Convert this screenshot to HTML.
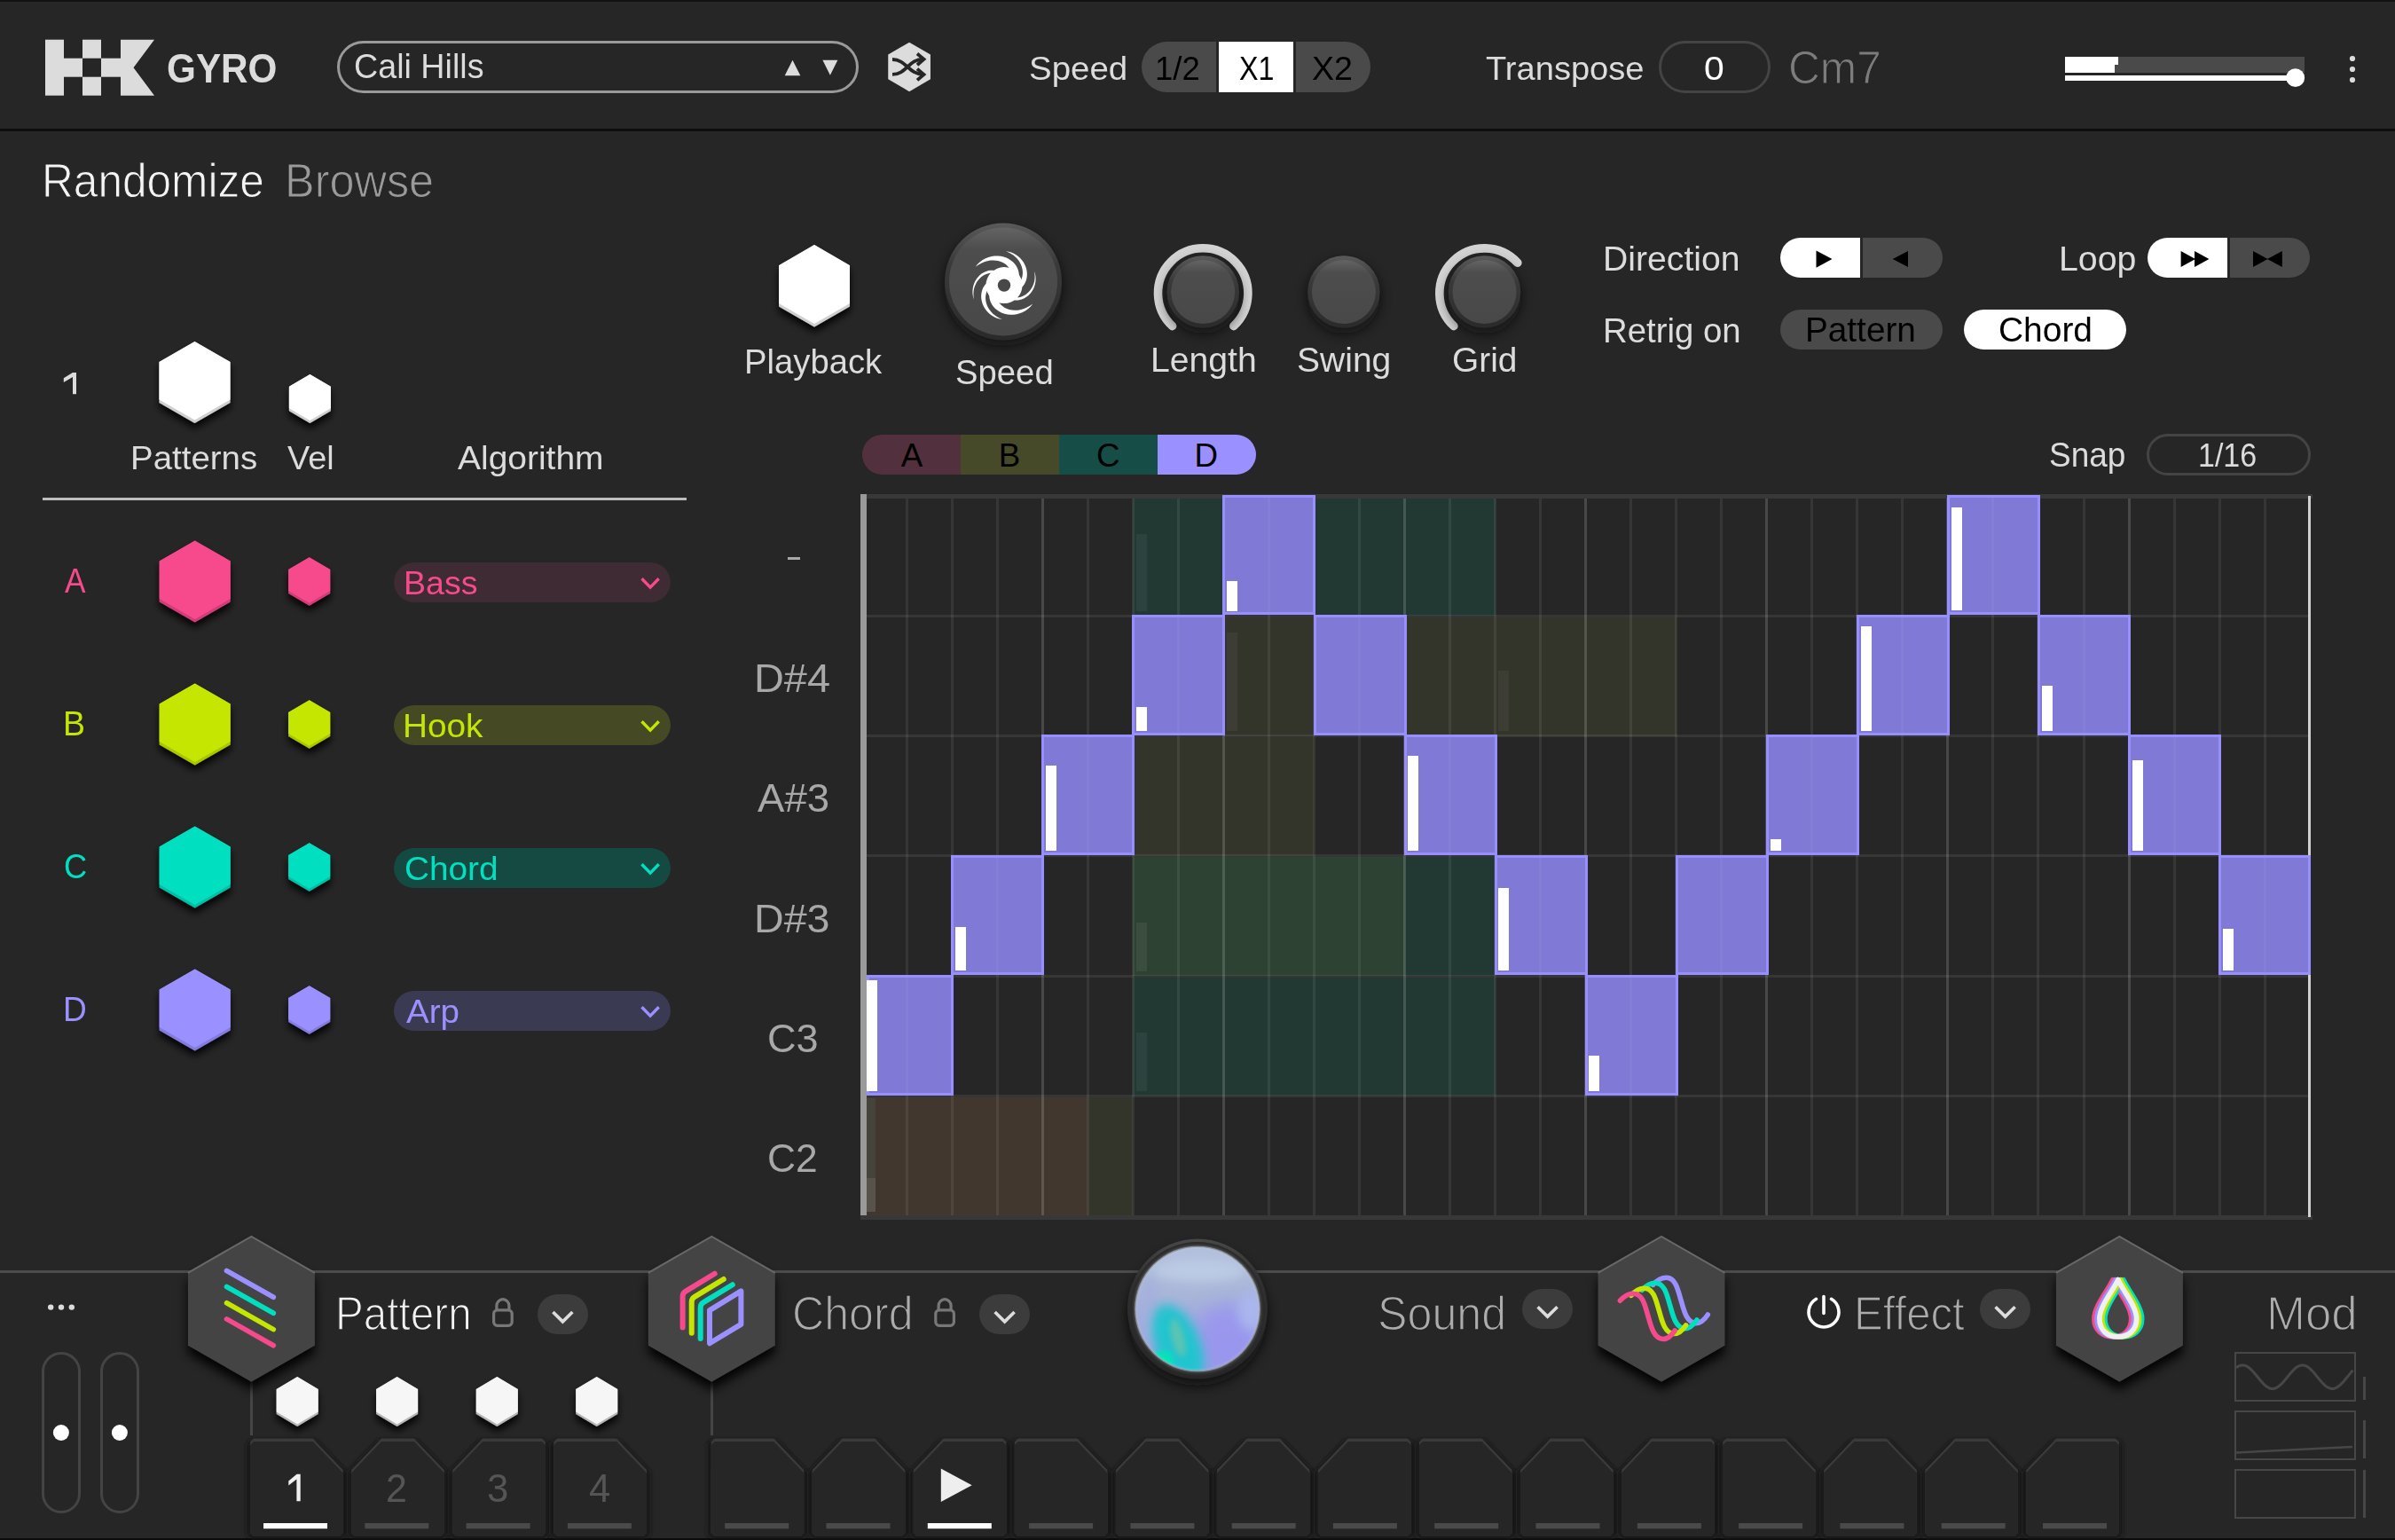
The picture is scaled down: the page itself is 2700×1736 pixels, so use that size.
<!DOCTYPE html>
<html><head><meta charset="utf-8"><title>GYRO</title>
<style>
html,body{margin:0;padding:0;}
body{width:2700px;height:1736px;background:#262626;position:relative;overflow:hidden;font-family:"Liberation Sans",sans-serif;}
.b{position:absolute;box-sizing:border-box;}
.t{position:absolute;white-space:nowrap;line-height:1;transform-origin:0 0;display:block;}
svg.ov{position:absolute;left:0;top:0;}
</style></head>
<body>
<div class="b" style="left:0.00px;top:0.00px;width:2700.00px;height:1.50px;background:#111;"></div>
<div class="b" style="left:0.00px;top:144.50px;width:2700.00px;height:3.00px;background:#0e0e0e;"></div>
<div class="b" style="left:380.00px;top:46.00px;width:587.50px;height:59.00px;background:transparent;border:3px solid #9a9a9a;border-radius:30px;"></div>
<div class="b" style="left:1287.00px;top:46.80px;width:84.00px;height:57.50px;background:#4a4a4a;border-radius:29px 0 0 29px;"></div>
<div class="b" style="left:1374.00px;top:46.80px;width:84.00px;height:57.50px;background:#ffffff;"></div>
<div class="b" style="left:1461.00px;top:46.80px;width:84.00px;height:57.50px;background:#4a4a4a;border-radius:0 29px 29px 0;"></div>
<div class="b" style="left:1870.40px;top:46.00px;width:125.60px;height:59.00px;background:transparent;border:3px solid #444;border-radius:30px;"></div>
<div class="b" style="left:2328.00px;top:63.70px;width:270.00px;height:18.50px;background:#4a4a4a;"></div>
<div class="b" style="left:2328.00px;top:63.70px;width:60.00px;height:9.50px;background:#fff;"></div>
<div class="b" style="left:2328.00px;top:73.00px;width:56.00px;height:9.20px;background:#fff;"></div>
<div class="b" style="left:2328.00px;top:85.00px;width:262.00px;height:6.00px;background:#fff;"></div>
<div class="b" style="left:48.00px;top:560.50px;width:726.00px;height:3.00px;background:#bdbdbd;"></div>
<div class="b" style="left:443.50px;top:633.50px;width:312.00px;height:45.00px;background:#3e2b33;border-radius:23px;"></div>
<div class="b" style="left:443.50px;top:794.50px;width:312.00px;height:45.00px;background:#454a24;border-radius:23px;"></div>
<div class="b" style="left:443.50px;top:955.50px;width:312.00px;height:45.00px;background:#154a43;border-radius:23px;"></div>
<div class="b" style="left:443.50px;top:1116.50px;width:312.00px;height:45.00px;background:#3a3a52;border-radius:23px;"></div>
<div class="b" style="left:2007.00px;top:268.00px;width:90.00px;height:45.00px;background:#fff;border-radius:23px 0 0 23px;"></div>
<div class="b" style="left:2100.00px;top:268.00px;width:90.00px;height:45.00px;background:#4a4a4a;border-radius:0 23px 23px 0;"></div>
<div class="b" style="left:2421.00px;top:268.00px;width:90.00px;height:45.00px;background:#fff;border-radius:23px 0 0 23px;"></div>
<div class="b" style="left:2514.00px;top:268.00px;width:90.00px;height:45.00px;background:#4a4a4a;border-radius:0 23px 23px 0;"></div>
<div class="b" style="left:2007.00px;top:348.80px;width:183.00px;height:45.00px;background:#4a4a4a;border-radius:23px;"></div>
<div class="b" style="left:2213.70px;top:348.80px;width:183.30px;height:45.00px;background:#fff;border-radius:23px;"></div>
<div class="b" style="left:972.00px;top:490.00px;width:111.00px;height:45.00px;background:#53303e;border-radius:23px 0 0 23px;"></div>
<div class="b" style="left:1083.00px;top:490.00px;width:111.00px;height:45.00px;background:#464a28;"></div>
<div class="b" style="left:1194.00px;top:490.00px;width:111.00px;height:45.00px;background:#164e47;"></div>
<div class="b" style="left:1305.00px;top:490.00px;width:111.00px;height:45.00px;background:#9b90ff;border-radius:0 23px 23px 0;"></div>
<div class="b" style="left:2420.00px;top:488.70px;width:185.00px;height:47.30px;background:transparent;border:3px solid #444;border-radius:24px;"></div>
<div class="b" style="left:1277.38px;top:560.50px;width:102.06px;height:133.80px;background:#223833;"></div>
<div class="b" style="left:1481.50px;top:560.50px;width:204.12px;height:133.80px;background:#223833;"></div>
<div class="b" style="left:1379.44px;top:695.80px;width:102.06px;height:133.80px;background:#33352a;"></div>
<div class="b" style="left:1583.56px;top:695.80px;width:306.18px;height:133.80px;background:#33352a;"></div>
<div class="b" style="left:1277.38px;top:831.10px;width:204.12px;height:133.80px;background:#33352a;"></div>
<div class="b" style="left:1277.38px;top:966.40px;width:306.18px;height:133.80px;background:#2d4232;"></div>
<div class="b" style="left:1583.56px;top:966.40px;width:102.06px;height:133.80px;background:#223833;"></div>
<div class="b" style="left:1277.38px;top:1101.70px;width:408.24px;height:133.80px;background:#223833;"></div>
<div class="b" style="left:976.50px;top:1237.00px;width:249.85px;height:133.80px;background:#42372e;"></div>
<div class="b" style="left:1226.35px;top:1237.00px;width:51.03px;height:133.80px;background:#33352a;"></div>
<div class="b" style="left:1281.18px;top:602.30px;width:11.60px;height:86.50px;background:#2d423e;"></div>
<div class="b" style="left:1383.24px;top:713.10px;width:11.60px;height:111.00px;background:#3d3d36;"></div>
<div class="b" style="left:1689.42px;top:756.10px;width:11.60px;height:68.00px;background:#3d3d36;"></div>
<div class="b" style="left:1281.18px;top:1039.70px;width:11.60px;height:55.00px;background:#3a4d3f;"></div>
<div class="b" style="left:1281.18px;top:1164.00px;width:11.60px;height:66.00px;background:#2d423e;"></div>
<div class="b" style="left:977.00px;top:1238.00px;width:10.00px;height:90.00px;background:#46443a;"></div>
<div class="b" style="left:977.00px;top:1327.60px;width:10.00px;height:38.00px;background:#57524a;"></div>
<div class="b" style="left:1020.73px;top:562.00px;width:3.00px;height:808.00px;background:rgba(255,255,255,0.075);"></div>
<div class="b" style="left:1071.76px;top:562.00px;width:3.00px;height:808.00px;background:rgba(255,255,255,0.075);"></div>
<div class="b" style="left:1122.79px;top:562.00px;width:3.00px;height:808.00px;background:rgba(255,255,255,0.075);"></div>
<div class="b" style="left:1173.82px;top:562.00px;width:3.00px;height:808.00px;background:rgba(255,255,255,0.155);"></div>
<div class="b" style="left:1224.85px;top:562.00px;width:3.00px;height:808.00px;background:rgba(255,255,255,0.075);"></div>
<div class="b" style="left:1275.88px;top:562.00px;width:3.00px;height:808.00px;background:rgba(255,255,255,0.075);"></div>
<div class="b" style="left:1326.91px;top:562.00px;width:3.00px;height:808.00px;background:rgba(255,255,255,0.075);"></div>
<div class="b" style="left:1377.94px;top:562.00px;width:3.00px;height:808.00px;background:rgba(255,255,255,0.155);"></div>
<div class="b" style="left:1428.97px;top:562.00px;width:3.00px;height:808.00px;background:rgba(255,255,255,0.075);"></div>
<div class="b" style="left:1480.00px;top:562.00px;width:3.00px;height:808.00px;background:rgba(255,255,255,0.075);"></div>
<div class="b" style="left:1531.03px;top:562.00px;width:3.00px;height:808.00px;background:rgba(255,255,255,0.075);"></div>
<div class="b" style="left:1582.06px;top:562.00px;width:3.00px;height:808.00px;background:rgba(255,255,255,0.155);"></div>
<div class="b" style="left:1633.09px;top:562.00px;width:3.00px;height:808.00px;background:rgba(255,255,255,0.075);"></div>
<div class="b" style="left:1684.12px;top:562.00px;width:3.00px;height:808.00px;background:rgba(255,255,255,0.075);"></div>
<div class="b" style="left:1735.15px;top:562.00px;width:3.00px;height:808.00px;background:rgba(255,255,255,0.075);"></div>
<div class="b" style="left:1786.18px;top:562.00px;width:3.00px;height:808.00px;background:rgba(255,255,255,0.155);"></div>
<div class="b" style="left:1837.21px;top:562.00px;width:3.00px;height:808.00px;background:rgba(255,255,255,0.075);"></div>
<div class="b" style="left:1888.24px;top:562.00px;width:3.00px;height:808.00px;background:rgba(255,255,255,0.075);"></div>
<div class="b" style="left:1939.27px;top:562.00px;width:3.00px;height:808.00px;background:rgba(255,255,255,0.075);"></div>
<div class="b" style="left:1990.30px;top:562.00px;width:3.00px;height:808.00px;background:rgba(255,255,255,0.155);"></div>
<div class="b" style="left:2041.33px;top:562.00px;width:3.00px;height:808.00px;background:rgba(255,255,255,0.075);"></div>
<div class="b" style="left:2092.36px;top:562.00px;width:3.00px;height:808.00px;background:rgba(255,255,255,0.075);"></div>
<div class="b" style="left:2143.39px;top:562.00px;width:3.00px;height:808.00px;background:rgba(255,255,255,0.075);"></div>
<div class="b" style="left:2194.42px;top:562.00px;width:3.00px;height:808.00px;background:rgba(255,255,255,0.155);"></div>
<div class="b" style="left:2245.45px;top:562.00px;width:3.00px;height:808.00px;background:rgba(255,255,255,0.075);"></div>
<div class="b" style="left:2296.48px;top:562.00px;width:3.00px;height:808.00px;background:rgba(255,255,255,0.075);"></div>
<div class="b" style="left:2347.51px;top:562.00px;width:3.00px;height:808.00px;background:rgba(255,255,255,0.075);"></div>
<div class="b" style="left:2398.54px;top:562.00px;width:3.00px;height:808.00px;background:rgba(255,255,255,0.155);"></div>
<div class="b" style="left:2449.57px;top:562.00px;width:3.00px;height:808.00px;background:rgba(255,255,255,0.075);"></div>
<div class="b" style="left:2500.60px;top:562.00px;width:3.00px;height:808.00px;background:rgba(255,255,255,0.075);"></div>
<div class="b" style="left:2551.63px;top:562.00px;width:3.00px;height:808.00px;background:rgba(255,255,255,0.075);"></div>
<div class="b" style="left:976.50px;top:692.80px;width:1625.20px;height:3.00px;background:rgba(255,255,255,0.075);"></div>
<div class="b" style="left:976.50px;top:828.10px;width:1625.20px;height:3.00px;background:rgba(255,255,255,0.075);"></div>
<div class="b" style="left:976.50px;top:963.40px;width:1625.20px;height:3.00px;background:rgba(255,255,255,0.075);"></div>
<div class="b" style="left:976.50px;top:1098.70px;width:1625.20px;height:3.00px;background:rgba(255,255,255,0.075);"></div>
<div class="b" style="left:976.50px;top:1234.00px;width:1625.20px;height:3.00px;background:rgba(255,255,255,0.075);"></div>
<div class="b" style="left:976.50px;top:556.50px;width:1630.00px;height:5.50px;background:#383838;"></div>
<div class="b" style="left:970.00px;top:1369.70px;width:1636.50px;height:5.30px;background:#383838;"></div>
<div class="b" style="left:970.00px;top:556.50px;width:6.50px;height:813.20px;background:#9a9a9a;"></div>
<div class="b" style="left:2601.70px;top:559.00px;width:3.10px;height:813.00px;background:#d0d0d0;"></div>
<div class="b" style="left:1378.44px;top:557.80px;width:105.06px;height:135.50px;background:#807ad6;border:3px solid #978fff;box-sizing:border-box;"></div>
<div class="b" style="left:1428.97px;top:560.80px;width:3.00px;height:129.50px;background:rgba(255,255,255,0.035);"></div>
<div class="b" style="left:1383.24px;top:655.00px;width:12.00px;height:33.50px;background:#fff;"></div>
<div class="b" style="left:2194.92px;top:557.80px;width:105.06px;height:135.50px;background:#807ad6;border:3px solid #978fff;box-sizing:border-box;"></div>
<div class="b" style="left:2245.45px;top:560.80px;width:3.00px;height:129.50px;background:rgba(255,255,255,0.035);"></div>
<div class="b" style="left:2199.72px;top:572.10px;width:12.00px;height:116.40px;background:#fff;"></div>
<div class="b" style="left:1276.38px;top:693.10px;width:105.06px;height:135.50px;background:#807ad6;border:3px solid #978fff;box-sizing:border-box;"></div>
<div class="b" style="left:1326.91px;top:696.10px;width:3.00px;height:129.50px;background:rgba(255,255,255,0.035);"></div>
<div class="b" style="left:1281.18px;top:796.80px;width:12.00px;height:27.00px;background:#fff;"></div>
<div class="b" style="left:1480.50px;top:693.10px;width:105.06px;height:135.50px;background:#807ad6;border:3px solid #978fff;box-sizing:border-box;"></div>
<div class="b" style="left:1531.03px;top:696.10px;width:3.00px;height:129.50px;background:rgba(255,255,255,0.035);"></div>
<div class="b" style="left:2092.86px;top:693.10px;width:105.06px;height:135.50px;background:#807ad6;border:3px solid #978fff;box-sizing:border-box;"></div>
<div class="b" style="left:2143.39px;top:696.10px;width:3.00px;height:129.50px;background:rgba(255,255,255,0.035);"></div>
<div class="b" style="left:2097.66px;top:706.30px;width:12.00px;height:117.50px;background:#fff;"></div>
<div class="b" style="left:2296.98px;top:693.10px;width:105.06px;height:135.50px;background:#807ad6;border:3px solid #978fff;box-sizing:border-box;"></div>
<div class="b" style="left:2347.51px;top:696.10px;width:3.00px;height:129.50px;background:rgba(255,255,255,0.035);"></div>
<div class="b" style="left:2301.78px;top:772.80px;width:12.00px;height:51.00px;background:#fff;"></div>
<div class="b" style="left:1174.32px;top:828.40px;width:105.06px;height:135.50px;background:#807ad6;border:3px solid #978fff;box-sizing:border-box;"></div>
<div class="b" style="left:1224.85px;top:831.40px;width:3.00px;height:129.50px;background:rgba(255,255,255,0.035);"></div>
<div class="b" style="left:1179.12px;top:862.60px;width:12.00px;height:96.50px;background:#fff;"></div>
<div class="b" style="left:1582.56px;top:828.40px;width:105.06px;height:135.50px;background:#807ad6;border:3px solid #978fff;box-sizing:border-box;"></div>
<div class="b" style="left:1633.09px;top:831.40px;width:3.00px;height:129.50px;background:rgba(255,255,255,0.035);"></div>
<div class="b" style="left:1587.36px;top:852.40px;width:12.00px;height:106.70px;background:#fff;"></div>
<div class="b" style="left:1990.80px;top:828.40px;width:105.06px;height:135.50px;background:#807ad6;border:3px solid #978fff;box-sizing:border-box;"></div>
<div class="b" style="left:2041.33px;top:831.40px;width:3.00px;height:129.50px;background:rgba(255,255,255,0.035);"></div>
<div class="b" style="left:1995.60px;top:946.10px;width:12.00px;height:13.00px;background:#fff;"></div>
<div class="b" style="left:2399.04px;top:828.40px;width:105.06px;height:135.50px;background:#807ad6;border:3px solid #978fff;box-sizing:border-box;"></div>
<div class="b" style="left:2449.57px;top:831.40px;width:3.00px;height:129.50px;background:rgba(255,255,255,0.035);"></div>
<div class="b" style="left:2403.84px;top:856.60px;width:12.00px;height:102.50px;background:#fff;"></div>
<div class="b" style="left:1072.26px;top:963.70px;width:105.06px;height:135.50px;background:#807ad6;border:3px solid #978fff;box-sizing:border-box;"></div>
<div class="b" style="left:1122.79px;top:966.70px;width:3.00px;height:129.50px;background:rgba(255,255,255,0.035);"></div>
<div class="b" style="left:1077.06px;top:1045.40px;width:12.00px;height:49.00px;background:#fff;"></div>
<div class="b" style="left:1684.62px;top:963.70px;width:105.06px;height:135.50px;background:#807ad6;border:3px solid #978fff;box-sizing:border-box;"></div>
<div class="b" style="left:1735.15px;top:966.70px;width:3.00px;height:129.50px;background:rgba(255,255,255,0.035);"></div>
<div class="b" style="left:1689.42px;top:1001.40px;width:12.00px;height:93.00px;background:#fff;"></div>
<div class="b" style="left:1888.74px;top:963.70px;width:105.06px;height:135.50px;background:#807ad6;border:3px solid #978fff;box-sizing:border-box;"></div>
<div class="b" style="left:1939.27px;top:966.70px;width:3.00px;height:129.50px;background:rgba(255,255,255,0.035);"></div>
<div class="b" style="left:2501.10px;top:963.70px;width:103.70px;height:135.50px;background:#807ad6;border:3px solid #978fff;box-sizing:border-box;"></div>
<div class="b" style="left:2551.63px;top:966.70px;width:3.00px;height:129.50px;background:rgba(255,255,255,0.035);"></div>
<div class="b" style="left:2505.90px;top:1047.10px;width:12.00px;height:47.30px;background:#fff;"></div>
<div class="b" style="left:976.50px;top:1099.00px;width:98.76px;height:135.50px;background:#807ad6;border:3px solid #978fff;box-sizing:border-box;"></div>
<div class="b" style="left:1020.73px;top:1102.00px;width:3.00px;height:129.50px;background:rgba(255,255,255,0.035);"></div>
<div class="b" style="left:976.50px;top:1104.70px;width:12.00px;height:125.00px;background:#fff;"></div>
<div class="b" style="left:1786.68px;top:1099.00px;width:105.06px;height:135.50px;background:#807ad6;border:3px solid #978fff;box-sizing:border-box;"></div>
<div class="b" style="left:1837.21px;top:1102.00px;width:3.00px;height:129.50px;background:rgba(255,255,255,0.035);"></div>
<div class="b" style="left:1791.48px;top:1189.70px;width:12.00px;height:40.00px;background:#fff;"></div>
<div class="b" style="left:888.00px;top:628.30px;width:14.00px;height:3.20px;background:#a8a8a8;"></div>
<div class="b" style="left:0.00px;top:1432.00px;width:2700.00px;height:3.00px;background:#4c4c4c;"></div>
<div class="b" style="left:0.00px;top:1734.30px;width:2700.00px;height:1.70px;background:#0c0c0c;"></div>
<div class="b" style="left:47.00px;top:1524.00px;width:44.00px;height:182.30px;background:transparent;border:3px solid #444;border-radius:22px;box-sizing:border-box;"></div>
<div class="b" style="left:112.80px;top:1524.00px;width:44.00px;height:182.30px;background:transparent;border:3px solid #444;border-radius:22px;box-sizing:border-box;"></div>
<div class="b" style="left:282.00px;top:1557.00px;width:3.00px;height:61.00px;background:#454545;"></div>
<div class="b" style="left:801.00px;top:1557.00px;width:3.00px;height:61.00px;background:#454545;"></div>
<div class="b" style="left:605.80px;top:1458.80px;width:57.30px;height:45.00px;background:#3c3c3c;border-radius:23px;"></div>
<div class="b" style="left:1104.00px;top:1458.80px;width:57.30px;height:45.00px;background:#3c3c3c;border-radius:23px;"></div>
<div class="b" style="left:1716.00px;top:1453.00px;width:57.30px;height:45.00px;background:#3c3c3c;border-radius:23px;"></div>
<div class="b" style="left:2232.00px;top:1453.00px;width:57.30px;height:45.00px;background:#3c3c3c;border-radius:23px;"></div>
<div class="b" style="left:2518.80px;top:1524.00px;width:137.20px;height:56.00px;background:transparent;border:2.6px solid #474747;box-sizing:border-box;"></div>
<div class="b" style="left:2518.80px;top:1589.90px;width:137.20px;height:56.40px;background:transparent;border:2.6px solid #474747;box-sizing:border-box;"></div>
<div class="b" style="left:2518.80px;top:1655.50px;width:137.20px;height:56.50px;background:transparent;border:2.6px solid #474747;box-sizing:border-box;"></div>
<div class="b" style="left:2664.00px;top:1551.50px;width:3.00px;height:26.50px;background:#474747;"></div>
<div class="b" style="left:2664.00px;top:1600.70px;width:3.00px;height:43.30px;background:#474747;"></div>
<div class="b" style="left:2664.00px;top:1657.00px;width:3.00px;height:53.50px;background:#474747;"></div>
<svg class="ov" width="2700" height="1736" viewBox="0 0 2700 1736">
<defs>
<filter id="sh1" x="-40%" y="-40%" width="180%" height="200%"><feDropShadow dx="0" dy="6" stdDeviation="4.5" flood-color="#000" flood-opacity="0.9"/></filter>
<filter id="bh" x="-30%" y="-30%" width="160%" height="170%"><feGaussianBlur stdDeviation="6"/></filter>
<filter id="kb" x="-40%" y="-40%" width="180%" height="180%"><feGaussianBlur stdDeviation="7"/></filter>
<filter id="sl" x="-20%" y="-20%" width="140%" height="140%"><feGaussianBlur stdDeviation="2.5"/></filter>
<linearGradient id="kring" x1="0" y1="0" x2="0" y2="1"><stop offset="0" stop-color="#5a5a5a"/><stop offset="0.35" stop-color="#3a3a3a"/><stop offset="1" stop-color="#2a2a2a"/></linearGradient>
<linearGradient id="kface" x1="0" y1="0" x2="0" y2="1"><stop offset="0" stop-color="#646464"/><stop offset="0.2" stop-color="#4d4d4d"/><stop offset="1" stop-color="#484848"/></linearGradient>
<linearGradient id="sring" x1="0" y1="0" x2="0" y2="1"><stop offset="0" stop-color="#484848"/><stop offset="0.3" stop-color="#303030"/><stop offset="1" stop-color="#262626"/></linearGradient>
<linearGradient id="sph1" x1="0" y1="0" x2="0" y2="1"><stop offset="0" stop-color="#b4c2de"/><stop offset="0.42" stop-color="#a8b5d8"/><stop offset="0.6" stop-color="#a0a8e0"/><stop offset="1" stop-color="#9698ea"/></linearGradient>
<radialGradient id="sph2" cx="0.33" cy="0.85" r="0.5"><stop offset="0" stop-color="#00e0c0" stop-opacity="0.95"/><stop offset="0.5" stop-color="#38c8d0" stop-opacity="0.6"/><stop offset="1" stop-color="#60c0e0" stop-opacity="0"/></radialGradient>
<radialGradient id="sph3" cx="0.75" cy="0.8" r="0.4"><stop offset="0" stop-color="#8f8cf5" stop-opacity="0.9"/><stop offset="1" stop-color="#8f8cf5" stop-opacity="0"/></radialGradient>
<clipPath id="sclip"><circle cx="1350" cy="1475.5" r="69.5"/></clipPath>
<filter id="b2" x="-20%" y="-20%" width="140%" height="140%"><feGaussianBlur stdDeviation="1.5"/></filter>
<filter id="b3" x="-50%" y="-50%" width="200%" height="200%"><feGaussianBlur stdDeviation="3"/></filter>
<filter id="b6" x="-50%" y="-50%" width="200%" height="200%"><feGaussianBlur stdDeviation="6"/></filter>
<filter id="b10" x="-50%" y="-50%" width="200%" height="200%"><feGaussianBlur stdDeviation="10"/></filter>
</defs>
<g fill="#dcdcdc"><rect x="51" y="44.7" width="21" height="63"/><rect x="72" y="65.7" width="21" height="21"/><rect x="93" y="44.7" width="21" height="21"/><rect x="93" y="86.7" width="21" height="21"/><rect x="114" y="65.7" width="22" height="21"/><polygon points="136,44.7 174,44.7 150.5,76.2 174,107.7 136,107.7"/></g>
<polygon points="884.7,85.3 902.3,85.3 893.5,67.8" fill="#dcdcdc"/>
<polygon points="927.4,67.8 944.4,67.8 935.9,84.8" fill="#dcdcdc"/>
<polygon points="1025.10,47.65 1048.95,61.53 1048.95,89.28 1025.10,103.15 1001.25,89.28 1001.25,61.53" fill="#dcdcdc"/>
<g fill="none" stroke="#262626" stroke-width="3.8"><path d="M1006 67 C1022 67,1024 83.9,1041 83.9"/><path d="M1006 83.9 C1022 83.9,1024 66.7,1041 66.7"/><path d="M1034 60.5 L1041.5 66.7 L1034 73.2"/><path d="M1034 77.6 L1041.5 83.9 L1034 90.4"/></g>
<circle cx="2587.7" cy="87.7" r="10.4" fill="#fff"/>
<circle cx="2652" cy="66" r="3.1" fill="#dcdcdc"/>
<circle cx="2652" cy="78" r="3.1" fill="#dcdcdc"/>
<circle cx="2652" cy="90" r="3.1" fill="#dcdcdc"/>
<polygon points="71.8,426.3 81.9,420 86,420 86,444.2 82,444.2 82,425 71.8,431" fill="#dcdcdc"/>
<polygon points="219.50,385.00 259.50,408.00 259.50,454.00 219.50,477.00 179.50,454.00 179.50,408.00" fill="#d0d0d0" filter="url(#sh1)"/>
<polygon points="219.50,385.00 259.50,408.00 259.50,450.50 219.50,473.50 179.50,450.50 179.50,408.00" fill="#ffffff"/>
<polygon points="349.40,422.00 372.90,435.75 372.90,463.25 349.40,477.00 325.90,463.25 325.90,435.75" fill="#d0d0d0" filter="url(#sh1)"/>
<polygon points="349.40,422.00 372.90,435.75 372.90,460.25 349.40,474.00 325.90,460.25 325.90,435.75" fill="#ffffff"/>
<polygon points="219.70,609.50 259.70,632.50 259.70,678.50 219.70,701.50 179.70,678.50 179.70,632.50" fill="#d13e78" filter="url(#sh1)"/>
<polygon points="219.70,609.50 259.70,632.50 259.70,675.00 219.70,698.00 179.70,675.00 179.70,632.50" fill="#f74a8c"/>
<polygon points="348.70,628.25 372.20,641.88 372.20,669.12 348.70,682.75 325.20,669.12 325.20,641.88" fill="#d13e78" filter="url(#sh1)"/>
<polygon points="348.70,628.25 372.20,641.88 372.20,666.12 348.70,679.75 325.20,666.12 325.20,641.88" fill="#f74a8c"/>
<path d="M723.5 652.3 L733.1 662.1 L742.7 652.3" fill="none" stroke="#f74a8c" stroke-width="3.4"/>
<polygon points="219.70,770.50 259.70,793.50 259.70,839.50 219.70,862.50 179.70,839.50 179.70,793.50" fill="#a9c600" filter="url(#sh1)"/>
<polygon points="219.70,770.50 259.70,793.50 259.70,836.00 219.70,859.00 179.70,836.00 179.70,793.50" fill="#c4e600"/>
<polygon points="348.70,789.25 372.20,802.88 372.20,830.12 348.70,843.75 325.20,830.12 325.20,802.88" fill="#a9c600" filter="url(#sh1)"/>
<polygon points="348.70,789.25 372.20,802.88 372.20,827.12 348.70,840.75 325.20,827.12 325.20,802.88" fill="#c4e600"/>
<path d="M723.5 813.3 L733.1 823.1 L742.7 813.3" fill="none" stroke="#c4e600" stroke-width="3.4"/>
<polygon points="219.70,931.50 259.70,954.50 259.70,1000.50 219.70,1023.50 179.70,1000.50 179.70,954.50" fill="#00c0a5" filter="url(#sh1)"/>
<polygon points="219.70,931.50 259.70,954.50 259.70,997.00 219.70,1020.00 179.70,997.00 179.70,954.50" fill="#00e0c0"/>
<polygon points="348.70,950.25 372.20,963.88 372.20,991.12 348.70,1004.75 325.20,991.12 325.20,963.88" fill="#00c0a5" filter="url(#sh1)"/>
<polygon points="348.70,950.25 372.20,963.88 372.20,988.12 348.70,1001.75 325.20,988.12 325.20,963.88" fill="#00e0c0"/>
<path d="M723.5 974.3 L733.1 984.1 L742.7 974.3" fill="none" stroke="#00e0c0" stroke-width="3.4"/>
<polygon points="219.70,1092.50 259.70,1115.50 259.70,1161.50 219.70,1184.50 179.70,1161.50 179.70,1115.50" fill="#847cdc" filter="url(#sh1)"/>
<polygon points="219.70,1092.50 259.70,1115.50 259.70,1158.00 219.70,1181.00 179.70,1158.00 179.70,1115.50" fill="#9b90ff"/>
<polygon points="348.70,1111.25 372.20,1124.88 372.20,1152.12 348.70,1165.75 325.20,1152.12 325.20,1124.88" fill="#847cdc" filter="url(#sh1)"/>
<polygon points="348.70,1111.25 372.20,1124.88 372.20,1149.12 348.70,1162.75 325.20,1149.12 325.20,1124.88" fill="#9b90ff"/>
<path d="M723.5 1135.3 L733.1 1145.1 L742.7 1135.3" fill="none" stroke="#9b90ff" stroke-width="3.4"/>
<polygon points="918.00,276.05 958.00,299.18 958.00,345.43 918.00,368.55 878.00,345.43 878.00,299.18" fill="#d0d0d0" filter="url(#sh1)"/>
<polygon points="918.00,276.05 958.00,299.18 958.00,341.93 918.00,365.05 878.00,341.93 878.00,299.18" fill="#ffffff"/>
<circle cx="1131" cy="323.5" r="66" fill="#111" filter="url(#kb)" opacity="0.75"/>
<circle cx="1131" cy="317.5" r="66" fill="url(#kring)"/>
<circle cx="1131" cy="317.5" r="61" fill="url(#kface)"/>
<path d="M1321.62 367.58 A50.7 50.7 0 1 1 1390.78 367.58" fill="none" stroke="#d2d2d2" stroke-width="9.6" stroke-linecap="round"/>
<circle cx="1356.2" cy="335" r="40.8" fill="#111" filter="url(#kb)" opacity="0.75"/>
<circle cx="1356.2" cy="329" r="40.8" fill="url(#kring)"/>
<circle cx="1356.2" cy="329" r="36" fill="url(#kface)"/>
<circle cx="1514.9" cy="335" r="40.8" fill="#111" filter="url(#kb)" opacity="0.75"/>
<circle cx="1514.9" cy="329" r="40.8" fill="url(#kring)"/>
<circle cx="1514.9" cy="329" r="36" fill="url(#kface)"/>
<path d="M1638.92 367.58 A50.7 50.7 0 1 1 1710.82 296.18" fill="none" stroke="#d2d2d2" stroke-width="9.6" stroke-linecap="round"/>
<circle cx="1673.5" cy="335" r="40.8" fill="#111" filter="url(#kb)" opacity="0.75"/>
<circle cx="1673.5" cy="329" r="40.8" fill="url(#kring)"/>
<circle cx="1673.5" cy="329" r="36" fill="url(#kface)"/>
<g fill="#fff"><polygon points="1099.71,300.63 1102.07,297.71 1104.81,295.16 1107.82,292.99 1111.05,291.23 1114.43,289.90 1117.88,288.98 1121.37,288.49 1124.83,288.42 1128.20,288.75 1131.44,289.47 1134.50,290.54 1137.34,291.94 1139.91,293.63 1142.20,295.57 1144.17,297.71 1145.80,300.02 1147.09,302.43 1148.01,304.90 1148.58,307.39 1148.79,309.84 1139.07,316.65 1139.90,314.83 1140.42,312.82 1140.58,310.69 1140.39,308.48 1139.83,306.24 1138.89,304.03 1137.57,301.90 1135.90,299.91 1133.89,298.10 1131.56,296.53 1128.95,295.23 1126.09,294.26 1123.02,293.64 1119.80,293.40 1116.46,293.57 1113.07,294.16 1109.67,295.18 1106.32,296.63 1103.05,298.49 1099.71,300.63"/><polygon points="1164.29,342.57 1161.93,345.49 1159.19,348.04 1156.18,350.21 1152.95,351.97 1149.57,353.30 1146.12,354.22 1142.63,354.71 1139.17,354.78 1135.80,354.45 1132.56,353.73 1129.50,352.66 1126.66,351.26 1124.09,349.57 1121.80,347.63 1119.83,345.49 1118.20,343.18 1116.91,340.77 1115.99,338.30 1115.42,335.81 1115.21,333.36 1124.93,326.55 1124.10,328.37 1123.58,330.38 1123.42,332.51 1123.61,334.72 1124.17,336.96 1125.11,339.17 1126.43,341.30 1128.10,343.29 1130.11,345.10 1132.44,346.67 1135.05,347.97 1137.91,348.94 1140.98,349.56 1144.20,349.80 1147.54,349.63 1150.93,349.04 1154.33,348.02 1157.68,346.57 1160.95,344.71 1164.29,342.57"/><polygon points="1134.01,283.15 1137.07,283.64 1140.02,284.53 1142.83,285.74 1145.46,287.25 1147.89,289.02 1150.09,291.01 1152.04,293.19 1153.73,295.52 1155.14,297.97 1156.25,300.52 1157.08,303.11 1157.61,305.72 1157.85,308.31 1157.81,310.86 1157.50,313.32 1156.92,315.66 1156.11,317.87 1155.07,319.91 1153.83,321.75 1152.42,323.39 1144.33,322.68 1146.01,321.70 1147.58,320.46 1149.00,318.97 1150.24,317.26 1151.27,315.34 1152.07,313.25 1152.62,311.00 1152.90,308.64 1152.90,306.19 1152.61,303.69 1152.01,301.16 1151.11,298.66 1149.91,296.21 1148.42,293.84 1146.63,291.60 1144.57,289.52 1142.26,287.62 1139.71,285.94 1136.95,284.49 1134.01,283.15"/><polygon points="1129.99,360.05 1126.93,359.56 1123.98,358.67 1121.17,357.46 1118.54,355.95 1116.11,354.18 1113.91,352.19 1111.96,350.01 1110.27,347.68 1108.86,345.23 1107.75,342.68 1106.92,340.09 1106.39,337.48 1106.15,334.89 1106.19,332.34 1106.50,329.88 1107.08,327.54 1107.89,325.33 1108.93,323.29 1110.17,321.45 1111.58,319.81 1119.67,320.52 1117.99,321.50 1116.42,322.74 1115.00,324.23 1113.76,325.94 1112.73,327.86 1111.93,329.95 1111.38,332.20 1111.10,334.56 1111.10,337.01 1111.39,339.51 1111.99,342.04 1112.89,344.54 1114.09,346.99 1115.58,349.36 1117.37,351.60 1119.43,353.68 1121.74,355.58 1124.29,357.26 1127.05,358.71 1129.99,360.05"/><polygon points="1165.99,305.75 1166.83,308.23 1167.35,310.79 1167.58,313.39 1167.54,315.97 1167.24,318.52 1166.70,320.99 1165.93,323.38 1164.95,325.65 1163.77,327.78 1162.42,329.75 1160.90,331.55 1159.25,333.17 1157.47,334.58 1155.61,335.79 1153.67,336.78 1151.69,337.54 1149.68,338.09 1147.68,338.41 1145.69,338.51 1143.76,338.39 1141.18,334.71 1142.97,335.14 1144.84,335.37 1146.77,335.37 1148.73,335.15 1150.70,334.70 1152.66,334.01 1154.57,333.10 1156.42,331.97 1158.18,330.62 1159.83,329.06 1161.35,327.30 1162.71,325.37 1163.89,323.27 1164.88,321.03 1165.66,318.66 1166.21,316.18 1166.52,313.63 1166.58,311.03 1166.39,308.40 1165.99,305.75"/><polygon points="1098.01,337.45 1097.17,334.97 1096.65,332.41 1096.42,329.81 1096.46,327.23 1096.76,324.68 1097.30,322.21 1098.07,319.82 1099.05,317.55 1100.23,315.42 1101.58,313.45 1103.10,311.65 1104.75,310.03 1106.53,308.62 1108.39,307.41 1110.33,306.42 1112.31,305.66 1114.32,305.11 1116.32,304.79 1118.31,304.69 1120.24,304.81 1122.82,308.49 1121.03,308.06 1119.16,307.83 1117.23,307.83 1115.27,308.05 1113.30,308.50 1111.34,309.19 1109.43,310.10 1107.58,311.23 1105.82,312.58 1104.17,314.14 1102.65,315.90 1101.29,317.83 1100.11,319.93 1099.12,322.17 1098.34,324.54 1097.79,327.02 1097.48,329.57 1097.42,332.17 1097.61,334.80 1098.01,337.45"/><circle cx="1132" cy="321.6" r="20.5"/></g>
<circle cx="1132" cy="321.6" r="7.2" fill="#484848"/>
<polygon points="2047.5,282.4 2065.5,292.1 2047.5,301.8" fill="#000"/>
<polygon points="2151,283 2133.7,292 2151,301" fill="#000"/>
<polygon points="2458.6,283 2475,292 2458.6,301" fill="#000"/><polygon points="2474,283 2490.4,292 2474,301" fill="#000"/>
<polygon points="2540,283 2556.6,292 2540,301" fill="#000"/><polygon points="2572.8,283 2556,292 2572.8,301" fill="#000"/>
<circle cx="57.2" cy="1473.6" r="3.2" fill="#dcdcdc"/>
<circle cx="69" cy="1473.6" r="3.2" fill="#dcdcdc"/>
<circle cx="80.8" cy="1473.6" r="3.2" fill="#dcdcdc"/>
<circle cx="68.9" cy="1615" r="9" fill="#fff"/><circle cx="134.9" cy="1615" r="9" fill="#fff"/>
<polygon points="278.50,1625.40 282.50,1621.40 356.20,1621.40 390.20,1656.90 390.20,1728.00 386.20,1732.00 282.50,1732.00 278.50,1728.00" fill="#151515" transform="translate(0,2)" filter="url(#sl)"/>
<polygon points="282.00,1625.40 286.00,1621.40 352.70,1621.40 386.70,1656.90 386.70,1728.00 382.70,1732.00 286.00,1732.00 282.00,1728.00" fill="#3a3a3a"/>
<polygon points="282.00,1628.90 286.00,1624.90 352.70,1624.90 386.70,1660.40 386.70,1728.00 382.70,1732.00 286.00,1732.00 282.00,1728.00" fill="#262626"/>
<rect x="297.0" y="1717" width="72" height="6.2" fill="#fff"/>
<polygon points="392.60,1656.90 426.60,1621.40 470.30,1621.40 504.30,1656.90 504.30,1728.00 500.30,1732.00 396.60,1732.00 392.60,1728.00" fill="#151515" transform="translate(0,2)" filter="url(#sl)"/>
<polygon points="396.10,1656.90 430.10,1621.40 466.80,1621.40 500.80,1656.90 500.80,1728.00 496.80,1732.00 400.10,1732.00 396.10,1728.00" fill="#3a3a3a"/>
<polygon points="396.10,1660.40 430.10,1624.90 466.80,1624.90 500.80,1660.40 500.80,1728.00 496.80,1732.00 400.10,1732.00 396.10,1728.00" fill="#262626"/>
<rect x="411.3" y="1717" width="72" height="6.2" fill="#4a4a4a"/>
<polygon points="506.70,1656.90 540.70,1621.40 614.40,1621.40 618.40,1625.40 618.40,1728.00 614.40,1732.00 510.70,1732.00 506.70,1728.00" fill="#151515" transform="translate(0,2)" filter="url(#sl)"/>
<polygon points="510.20,1656.90 544.20,1621.40 610.90,1621.40 614.90,1625.40 614.90,1728.00 610.90,1732.00 514.20,1732.00 510.20,1728.00" fill="#3a3a3a"/>
<polygon points="510.20,1660.40 544.20,1624.90 610.90,1624.90 614.90,1628.90 614.90,1728.00 610.90,1732.00 514.20,1732.00 510.20,1728.00" fill="#262626"/>
<rect x="525.6" y="1717" width="72" height="6.2" fill="#4a4a4a"/>
<polygon points="620.80,1625.40 624.80,1621.40 698.50,1621.40 732.50,1656.90 732.50,1728.00 728.50,1732.00 624.80,1732.00 620.80,1728.00" fill="#151515" transform="translate(0,2)" filter="url(#sl)"/>
<polygon points="624.30,1625.40 628.30,1621.40 695.00,1621.40 729.00,1656.90 729.00,1728.00 725.00,1732.00 628.30,1732.00 624.30,1728.00" fill="#3a3a3a"/>
<polygon points="624.30,1628.90 628.30,1624.90 695.00,1624.90 729.00,1660.40 729.00,1728.00 725.00,1732.00 628.30,1732.00 624.30,1728.00" fill="#262626"/>
<rect x="639.9" y="1717" width="72" height="6.2" fill="#4a4a4a"/>
<polygon points="798.10,1625.40 802.10,1621.40 875.80,1621.40 909.80,1656.90 909.80,1728.00 905.80,1732.00 802.10,1732.00 798.10,1728.00" fill="#151515" transform="translate(0,2)" filter="url(#sl)"/>
<polygon points="801.60,1625.40 805.60,1621.40 872.30,1621.40 906.30,1656.90 906.30,1728.00 902.30,1732.00 805.60,1732.00 801.60,1728.00" fill="#3a3a3a"/>
<polygon points="801.60,1628.90 805.60,1624.90 872.30,1624.90 906.30,1660.40 906.30,1728.00 902.30,1732.00 805.60,1732.00 801.60,1728.00" fill="#262626"/>
<rect x="817.2" y="1717" width="72" height="6.2" fill="#4a4a4a"/>
<polygon points="912.15,1656.90 946.15,1621.40 989.85,1621.40 1023.85,1656.90 1023.85,1728.00 1019.85,1732.00 916.15,1732.00 912.15,1728.00" fill="#151515" transform="translate(0,2)" filter="url(#sl)"/>
<polygon points="915.65,1656.90 949.65,1621.40 986.35,1621.40 1020.35,1656.90 1020.35,1728.00 1016.35,1732.00 919.65,1732.00 915.65,1728.00" fill="#3a3a3a"/>
<polygon points="915.65,1660.40 949.65,1624.90 986.35,1624.90 1020.35,1660.40 1020.35,1728.00 1016.35,1732.00 919.65,1732.00 915.65,1728.00" fill="#262626"/>
<rect x="931.5" y="1717" width="72" height="6.2" fill="#4a4a4a"/>
<polygon points="1026.20,1656.90 1060.20,1621.40 1133.90,1621.40 1137.90,1625.40 1137.90,1728.00 1133.90,1732.00 1030.20,1732.00 1026.20,1728.00" fill="#151515" transform="translate(0,2)" filter="url(#sl)"/>
<polygon points="1029.70,1656.90 1063.70,1621.40 1130.40,1621.40 1134.40,1625.40 1134.40,1728.00 1130.40,1732.00 1033.70,1732.00 1029.70,1728.00" fill="#3a3a3a"/>
<polygon points="1029.70,1660.40 1063.70,1624.90 1130.40,1624.90 1134.40,1628.90 1134.40,1728.00 1130.40,1732.00 1033.70,1732.00 1029.70,1728.00" fill="#262626"/>
<rect x="1045.8" y="1717" width="72" height="6.2" fill="#fff"/>
<polygon points="1140.25,1625.40 1144.25,1621.40 1217.95,1621.40 1251.95,1656.90 1251.95,1728.00 1247.95,1732.00 1144.25,1732.00 1140.25,1728.00" fill="#151515" transform="translate(0,2)" filter="url(#sl)"/>
<polygon points="1143.75,1625.40 1147.75,1621.40 1214.45,1621.40 1248.45,1656.90 1248.45,1728.00 1244.45,1732.00 1147.75,1732.00 1143.75,1728.00" fill="#3a3a3a"/>
<polygon points="1143.75,1628.90 1147.75,1624.90 1214.45,1624.90 1248.45,1660.40 1248.45,1728.00 1244.45,1732.00 1147.75,1732.00 1143.75,1728.00" fill="#262626"/>
<rect x="1160.1" y="1717" width="72" height="6.2" fill="#4a4a4a"/>
<polygon points="1254.30,1656.90 1288.30,1621.40 1332.00,1621.40 1366.00,1656.90 1366.00,1728.00 1362.00,1732.00 1258.30,1732.00 1254.30,1728.00" fill="#151515" transform="translate(0,2)" filter="url(#sl)"/>
<polygon points="1257.80,1656.90 1291.80,1621.40 1328.50,1621.40 1362.50,1656.90 1362.50,1728.00 1358.50,1732.00 1261.80,1732.00 1257.80,1728.00" fill="#3a3a3a"/>
<polygon points="1257.80,1660.40 1291.80,1624.90 1328.50,1624.90 1362.50,1660.40 1362.50,1728.00 1358.50,1732.00 1261.80,1732.00 1257.80,1728.00" fill="#262626"/>
<rect x="1274.4" y="1717" width="72" height="6.2" fill="#4a4a4a"/>
<polygon points="1368.35,1656.90 1402.35,1621.40 1446.05,1621.40 1480.05,1656.90 1480.05,1728.00 1476.05,1732.00 1372.35,1732.00 1368.35,1728.00" fill="#151515" transform="translate(0,2)" filter="url(#sl)"/>
<polygon points="1371.85,1656.90 1405.85,1621.40 1442.55,1621.40 1476.55,1656.90 1476.55,1728.00 1472.55,1732.00 1375.85,1732.00 1371.85,1728.00" fill="#3a3a3a"/>
<polygon points="1371.85,1660.40 1405.85,1624.90 1442.55,1624.90 1476.55,1660.40 1476.55,1728.00 1472.55,1732.00 1375.85,1732.00 1371.85,1728.00" fill="#262626"/>
<rect x="1388.7" y="1717" width="72" height="6.2" fill="#4a4a4a"/>
<polygon points="1482.40,1656.90 1516.40,1621.40 1590.10,1621.40 1594.10,1625.40 1594.10,1728.00 1590.10,1732.00 1486.40,1732.00 1482.40,1728.00" fill="#151515" transform="translate(0,2)" filter="url(#sl)"/>
<polygon points="1485.90,1656.90 1519.90,1621.40 1586.60,1621.40 1590.60,1625.40 1590.60,1728.00 1586.60,1732.00 1489.90,1732.00 1485.90,1728.00" fill="#3a3a3a"/>
<polygon points="1485.90,1660.40 1519.90,1624.90 1586.60,1624.90 1590.60,1628.90 1590.60,1728.00 1586.60,1732.00 1489.90,1732.00 1485.90,1728.00" fill="#262626"/>
<rect x="1502.9" y="1717" width="72" height="6.2" fill="#4a4a4a"/>
<polygon points="1596.45,1625.40 1600.45,1621.40 1674.15,1621.40 1708.15,1656.90 1708.15,1728.00 1704.15,1732.00 1600.45,1732.00 1596.45,1728.00" fill="#151515" transform="translate(0,2)" filter="url(#sl)"/>
<polygon points="1599.95,1625.40 1603.95,1621.40 1670.65,1621.40 1704.65,1656.90 1704.65,1728.00 1700.65,1732.00 1603.95,1732.00 1599.95,1728.00" fill="#3a3a3a"/>
<polygon points="1599.95,1628.90 1603.95,1624.90 1670.65,1624.90 1704.65,1660.40 1704.65,1728.00 1700.65,1732.00 1603.95,1732.00 1599.95,1728.00" fill="#262626"/>
<rect x="1617.2" y="1717" width="72" height="6.2" fill="#4a4a4a"/>
<polygon points="1710.50,1656.90 1744.50,1621.40 1788.20,1621.40 1822.20,1656.90 1822.20,1728.00 1818.20,1732.00 1714.50,1732.00 1710.50,1728.00" fill="#151515" transform="translate(0,2)" filter="url(#sl)"/>
<polygon points="1714.00,1656.90 1748.00,1621.40 1784.70,1621.40 1818.70,1656.90 1818.70,1728.00 1814.70,1732.00 1718.00,1732.00 1714.00,1728.00" fill="#3a3a3a"/>
<polygon points="1714.00,1660.40 1748.00,1624.90 1784.70,1624.90 1818.70,1660.40 1818.70,1728.00 1814.70,1732.00 1718.00,1732.00 1714.00,1728.00" fill="#262626"/>
<rect x="1731.5" y="1717" width="72" height="6.2" fill="#4a4a4a"/>
<polygon points="1824.55,1656.90 1858.55,1621.40 1932.25,1621.40 1936.25,1625.40 1936.25,1728.00 1932.25,1732.00 1828.55,1732.00 1824.55,1728.00" fill="#151515" transform="translate(0,2)" filter="url(#sl)"/>
<polygon points="1828.05,1656.90 1862.05,1621.40 1928.75,1621.40 1932.75,1625.40 1932.75,1728.00 1928.75,1732.00 1832.05,1732.00 1828.05,1728.00" fill="#3a3a3a"/>
<polygon points="1828.05,1660.40 1862.05,1624.90 1928.75,1624.90 1932.75,1628.90 1932.75,1728.00 1928.75,1732.00 1832.05,1732.00 1828.05,1728.00" fill="#262626"/>
<rect x="1845.8" y="1717" width="72" height="6.2" fill="#4a4a4a"/>
<polygon points="1938.60,1625.40 1942.60,1621.40 2016.30,1621.40 2050.30,1656.90 2050.30,1728.00 2046.30,1732.00 1942.60,1732.00 1938.60,1728.00" fill="#151515" transform="translate(0,2)" filter="url(#sl)"/>
<polygon points="1942.10,1625.40 1946.10,1621.40 2012.80,1621.40 2046.80,1656.90 2046.80,1728.00 2042.80,1732.00 1946.10,1732.00 1942.10,1728.00" fill="#3a3a3a"/>
<polygon points="1942.10,1628.90 1946.10,1624.90 2012.80,1624.90 2046.80,1660.40 2046.80,1728.00 2042.80,1732.00 1946.10,1732.00 1942.10,1728.00" fill="#262626"/>
<rect x="1960.1" y="1717" width="72" height="6.2" fill="#4a4a4a"/>
<polygon points="2052.65,1656.90 2086.65,1621.40 2130.35,1621.40 2164.35,1656.90 2164.35,1728.00 2160.35,1732.00 2056.65,1732.00 2052.65,1728.00" fill="#151515" transform="translate(0,2)" filter="url(#sl)"/>
<polygon points="2056.15,1656.90 2090.15,1621.40 2126.85,1621.40 2160.85,1656.90 2160.85,1728.00 2156.85,1732.00 2060.15,1732.00 2056.15,1728.00" fill="#3a3a3a"/>
<polygon points="2056.15,1660.40 2090.15,1624.90 2126.85,1624.90 2160.85,1660.40 2160.85,1728.00 2156.85,1732.00 2060.15,1732.00 2056.15,1728.00" fill="#262626"/>
<rect x="2074.4" y="1717" width="72" height="6.2" fill="#4a4a4a"/>
<polygon points="2166.70,1656.90 2200.70,1621.40 2244.40,1621.40 2278.40,1656.90 2278.40,1728.00 2274.40,1732.00 2170.70,1732.00 2166.70,1728.00" fill="#151515" transform="translate(0,2)" filter="url(#sl)"/>
<polygon points="2170.20,1656.90 2204.20,1621.40 2240.90,1621.40 2274.90,1656.90 2274.90,1728.00 2270.90,1732.00 2174.20,1732.00 2170.20,1728.00" fill="#3a3a3a"/>
<polygon points="2170.20,1660.40 2204.20,1624.90 2240.90,1624.90 2274.90,1660.40 2274.90,1728.00 2270.90,1732.00 2174.20,1732.00 2170.20,1728.00" fill="#262626"/>
<rect x="2188.7" y="1717" width="72" height="6.2" fill="#4a4a4a"/>
<polygon points="2280.75,1656.90 2314.75,1621.40 2388.45,1621.40 2392.45,1625.40 2392.45,1728.00 2388.45,1732.00 2284.75,1732.00 2280.75,1728.00" fill="#151515" transform="translate(0,2)" filter="url(#sl)"/>
<polygon points="2284.25,1656.90 2318.25,1621.40 2384.95,1621.40 2388.95,1625.40 2388.95,1728.00 2384.95,1732.00 2288.25,1732.00 2284.25,1728.00" fill="#3a3a3a"/>
<polygon points="2284.25,1660.40 2318.25,1624.90 2384.95,1624.90 2388.95,1628.90 2388.95,1728.00 2384.95,1732.00 2288.25,1732.00 2284.25,1728.00" fill="#262626"/>
<rect x="2303.0" y="1717" width="72" height="6.2" fill="#4a4a4a"/>
<polygon points="325.3,1669.5 334.6,1661.8 338.7,1661.8 338.7,1692.2 334.4,1692.2 334.4,1667.4 325.3,1674.5" fill="#f0f0f0"/>
<polygon points="1060.8,1655.5 1095.7,1674.2 1060.8,1693" fill="#eee"/>
<polygon points="335.20,1552.00 358.70,1566.00 358.70,1594.00 335.20,1608.00 311.70,1594.00 311.70,1566.00" fill="#b8b8b8" filter="url(#sh1)"/>
<polygon points="335.20,1552.00 358.70,1566.00 358.70,1591.50 335.20,1605.50 311.70,1591.50 311.70,1566.00" fill="#f6f6f6"/>
<polygon points="447.60,1552.00 471.10,1566.00 471.10,1594.00 447.60,1608.00 424.10,1594.00 424.10,1566.00" fill="#b8b8b8" filter="url(#sh1)"/>
<polygon points="447.60,1552.00 471.10,1566.00 471.10,1591.50 447.60,1605.50 424.10,1591.50 424.10,1566.00" fill="#f6f6f6"/>
<polygon points="560.30,1552.00 583.80,1566.00 583.80,1594.00 560.30,1608.00 536.80,1594.00 536.80,1566.00" fill="#b8b8b8" filter="url(#sh1)"/>
<polygon points="560.30,1552.00 583.80,1566.00 583.80,1591.50 560.30,1605.50 536.80,1591.50 536.80,1566.00" fill="#f6f6f6"/>
<polygon points="672.70,1552.00 696.20,1566.00 696.20,1594.00 672.70,1608.00 649.20,1594.00 649.20,1566.00" fill="#b8b8b8" filter="url(#sh1)"/>
<polygon points="672.70,1552.00 696.20,1566.00 696.20,1591.50 672.70,1605.50 649.20,1591.50 649.20,1566.00" fill="#f6f6f6"/>
<polygon points="283.40,1393.80 354.90,1434.80 354.90,1516.80 283.40,1557.80 211.90,1516.80 211.90,1434.80" fill="#000" opacity="0.9" transform="translate(0,9)" filter="url(#bh)"/>
<polygon points="283.40,1393.80 354.90,1434.80 354.90,1516.80 283.40,1557.80 211.90,1516.80 211.90,1434.80" fill="#444"/>
<polyline points="211.90,1434.80 283.40,1393.80 354.90,1434.80" fill="none" stroke="#686868" stroke-width="2"/>
<polygon points="802.30,1393.80 873.80,1434.80 873.80,1516.80 802.30,1557.80 730.80,1516.80 730.80,1434.80" fill="#000" opacity="0.9" transform="translate(0,9)" filter="url(#bh)"/>
<polygon points="802.30,1393.80 873.80,1434.80 873.80,1516.80 802.30,1557.80 730.80,1516.80 730.80,1434.80" fill="#444"/>
<polyline points="730.80,1434.80 802.30,1393.80 873.80,1434.80" fill="none" stroke="#686868" stroke-width="2"/>
<polygon points="1873.00,1393.80 1944.50,1434.80 1944.50,1516.80 1873.00,1557.80 1801.50,1516.80 1801.50,1434.80" fill="#000" opacity="0.9" transform="translate(0,9)" filter="url(#bh)"/>
<polygon points="1873.00,1393.80 1944.50,1434.80 1944.50,1516.80 1873.00,1557.80 1801.50,1516.80 1801.50,1434.80" fill="#444"/>
<polyline points="1801.50,1434.80 1873.00,1393.80 1944.50,1434.80" fill="none" stroke="#686868" stroke-width="2"/>
<polygon points="2389.40,1393.80 2460.90,1434.80 2460.90,1516.80 2389.40,1557.80 2317.90,1516.80 2317.90,1434.80" fill="#000" opacity="0.9" transform="translate(0,9)" filter="url(#bh)"/>
<polygon points="2389.40,1393.80 2460.90,1434.80 2460.90,1516.80 2389.40,1557.80 2317.90,1516.80 2317.90,1434.80" fill="#444"/>
<polyline points="2317.90,1434.80 2389.40,1393.80 2460.90,1434.80" fill="none" stroke="#686868" stroke-width="2"/>
<path d="M255.5 1432.5 L308.3 1462.3" stroke="#9b90ff" stroke-width="5.6" stroke-linecap="round"/>
<path d="M255.5 1450.5 L308.3 1480.3" stroke="#00e0c0" stroke-width="5.6" stroke-linecap="round"/>
<path d="M255.5 1468.8 L308.3 1498.6" stroke="#c4e600" stroke-width="5.6" stroke-linecap="round"/>
<path d="M255.5 1486.9 L308.3 1516.7" stroke="#f74a8c" stroke-width="5.6" stroke-linecap="round"/>
<path d="M769.6 1496.4 V1461.5 Q769.6 1457.5 773.0 1455.6 L805.7 1435.7" fill="none" stroke="#f74a8c" stroke-width="6" stroke-linecap="round"/>
<path d="M779.7 1502.7 V1467.8 Q779.7 1463.8 783.1 1461.9 L815.8 1442.0" fill="none" stroke="#c4e600" stroke-width="6" stroke-linecap="round"/>
<path d="M789.7 1508.9 V1474.0 Q789.7 1470.0 793.1 1468.1 L825.8 1448.2" fill="none" stroke="#00e0c0" stroke-width="6" stroke-linecap="round"/>
<path d="M800 1514.3 V1477.1 L835.4 1455.4 V1492.9 Z" fill="none" stroke="#9b90ff" stroke-width="6" stroke-linejoin="round"/>
<path d="M1863.5 1448.3 C1867.9 1443.4 1873.4 1440.1 1879.0 1440.3 C1890.0 1440.6 1892.2 1457.2 1895.5 1467.1 C1898.8 1479.2 1902.1 1491.4 1912.1 1491.6 C1917.6 1491.6 1922.0 1487.0 1925.3 1482.0 " fill="none" stroke="#9b90ff" stroke-width="5.6" stroke-linecap="round"/>
<path d="M1851.1 1454.3 C1855.6 1449.3 1861.1 1446.0 1866.6 1446.2 C1877.6 1446.6 1879.8 1463.1 1883.2 1473.1 C1886.5 1485.2 1889.8 1497.4 1899.7 1497.6 C1905.2 1497.6 1909.6 1492.9 1913.0 1488.0 " fill="none" stroke="#00e0c0" stroke-width="5.6" stroke-linecap="round"/>
<path d="M1838.8 1460.3 C1843.2 1455.3 1848.7 1452.0 1854.2 1452.2 C1865.3 1452.5 1867.5 1469.1 1870.8 1479.0 C1874.1 1491.2 1877.4 1503.3 1887.4 1503.5 C1892.9 1503.5 1897.3 1498.9 1900.6 1493.9 " fill="none" stroke="#c4e600" stroke-width="5.6" stroke-linecap="round"/>
<path d="M1826.4 1466.2 C1830.8 1461.3 1836.4 1457.9 1841.9 1458.2 C1852.9 1458.5 1855.1 1475.1 1858.4 1485.0 C1861.7 1497.1 1865.1 1509.3 1875.0 1509.5 C1880.5 1509.5 1884.9 1504.9 1888.2 1499.9 " fill="none" stroke="#f74a8c" stroke-width="5.6" stroke-linecap="round"/>
<path d="M2381.8 1442.6 C2387.8 1455.6,2402.7 1472.6,2402.7 1486.6 C2402.7 1499.9,2393.3 1506.9,2381.8 1506.9 C2370.3 1506.9,2360.9 1499.9,2360.9 1486.6 C2360.9 1472.6,2375.8 1455.6,2381.8 1442.6 Z" fill="none" stroke="#f74a8c" stroke-width="5.6" stroke-linejoin="round"/>
<path d="M2393.8 1442.6 C2399.8 1455.6,2414.7 1472.6,2414.7 1486.6 C2414.7 1499.9,2405.3 1506.9,2393.8 1506.9 C2382.3 1506.9,2372.9 1499.9,2372.9 1486.6 C2372.9 1472.6,2387.8 1455.6,2393.8 1442.6 Z" fill="none" stroke="#00e0c0" stroke-width="5.6" stroke-linejoin="round"/>
<path d="M2384.8 1442.6 C2390.8 1455.6,2405.7 1472.6,2405.7 1486.6 C2405.7 1499.9,2396.3 1506.9,2384.8 1506.9 C2373.3 1506.9,2363.9 1499.9,2363.9 1486.6 C2363.9 1472.6,2378.8 1455.6,2384.8 1442.6 Z" fill="none" stroke="#9b90ff" stroke-width="5.6" stroke-linejoin="round"/>
<path d="M2390.8 1442.6 C2396.8 1455.6,2411.7 1472.6,2411.7 1486.6 C2411.7 1499.9,2402.3 1506.9,2390.8 1506.9 C2379.3 1506.9,2369.9 1499.9,2369.9 1486.6 C2369.9 1472.6,2384.8 1455.6,2390.8 1442.6 Z" fill="none" stroke="#c4e600" stroke-width="5.6" stroke-linejoin="round"/>
<path d="M2387.8 1442.6 C2393.8 1455.6,2408.7 1472.6,2408.7 1486.6 C2408.7 1499.9,2399.3 1506.9,2387.8 1506.9 C2376.3 1506.9,2366.9 1499.9,2366.9 1486.6 C2366.9 1472.6,2381.8 1455.6,2387.8 1442.6 Z" fill="none" stroke="#f0f0f0" stroke-width="5.8" stroke-linejoin="round"/>
<rect x="556.6" y="1476.9" width="20.6" height="17.4" rx="4" fill="none" stroke="#777" stroke-width="3.2"/>
<path d="M559.9 1476 V1472 A7 7.3 0 0 1 573.9 1472 V1476" fill="none" stroke="#777" stroke-width="3.2"/>
<rect x="1054.8" y="1476.9" width="20.6" height="17.4" rx="4" fill="none" stroke="#777" stroke-width="3.2"/>
<path d="M1058.1000000000001 1476 V1472 A7 7.3 0 0 1 1072.1000000000001 1472 V1476" fill="none" stroke="#777" stroke-width="3.2"/>
<path d="M623.4 1479.0 L634.4 1489.9 L645.4 1479.0" fill="none" stroke="#ddd" stroke-width="3.6"/>
<path d="M1121.6 1479.0 L1132.6 1489.9 L1143.6 1479.0" fill="none" stroke="#ddd" stroke-width="3.6"/>
<path d="M1733.6 1473.2 L1744.6 1484.1 L1755.6 1473.2" fill="none" stroke="#ddd" stroke-width="3.6"/>
<path d="M2249.6 1473.2 L2260.6 1484.1 L2271.6 1473.2" fill="none" stroke="#ddd" stroke-width="3.6"/>
<path d="M2047.5 1464.3 A17 17 0 1 0 2064.5 1464.3" fill="none" stroke="#fff" stroke-width="3.6" stroke-linecap="round"/><path d="M2056 1461.5 V1480.5" stroke="#fff" stroke-width="3.6" stroke-linecap="round"/>
<circle cx="1350" cy="1484" r="78" fill="#0a0a0a" filter="url(#kb)" opacity="0.85"/>
<circle cx="1350" cy="1475.5" r="79" fill="url(#sring)"/>
<circle cx="1350" cy="1475.5" r="75.5" fill="#2b2b2b"/>
<circle cx="1350" cy="1475.5" r="70.8" fill="#7d828c"/>
<g clip-path="url(#sclip)"><rect x="1270" y="1395" width="160" height="160" fill="url(#sph1)"/><ellipse cx="1352" cy="1432" rx="52" ry="13" fill="#bccbe4" filter="url(#b6)"/><ellipse cx="1385" cy="1505" rx="34" ry="36" fill="#9892f2" opacity="0.75" filter="url(#b10)"/><ellipse cx="1410" cy="1478" rx="14" ry="22" fill="#aab6ee" filter="url(#b6)"/><ellipse cx="1296" cy="1480" rx="10" ry="40" fill="#a4b0dc" filter="url(#b6)"/><ellipse cx="1328" cy="1516" rx="25" ry="48" transform="rotate(-22 1328 1516)" fill="#20c4d0" filter="url(#b6)"/><ellipse cx="1328" cy="1508" rx="7" ry="22" transform="rotate(-14 1328 1508)" fill="#62c4b0" opacity="0.9" filter="url(#b3)"/><ellipse cx="1310" cy="1533" rx="13" ry="10" fill="#00e6b6" filter="url(#b3)"/></g>
<circle cx="1350" cy="1475.5" r="70" fill="none" stroke="#c8ccd6" stroke-width="2.5" opacity="0.4" filter="url(#b2)"/>
<polyline points="2521.00,1541.78 2522.99,1540.43 2524.98,1539.49 2526.98,1538.99 2528.97,1538.93 2530.96,1539.34 2532.95,1540.18 2534.95,1541.44 2536.94,1543.07 2538.93,1545.01 2540.92,1547.20 2542.92,1549.56 2544.91,1552.01 2546.90,1554.47 2548.89,1556.85 2550.89,1559.07 2552.88,1561.06 2554.87,1562.74 2556.86,1564.05 2558.86,1564.96 2560.85,1565.43 2562.84,1565.45 2564.83,1565.01 2566.83,1564.13 2568.82,1562.84 2570.81,1561.19 2572.80,1559.23 2574.80,1557.02 2576.79,1554.65 2578.78,1552.20 2580.77,1549.74 2582.77,1547.37 2584.76,1545.17 2586.75,1543.20 2588.74,1541.55 2590.73,1540.26 2592.73,1539.39 2594.72,1538.95 2596.71,1538.97 2598.70,1539.44 2600.70,1540.35 2602.69,1541.67 2604.68,1543.35 2606.67,1545.34 2608.67,1547.56 2610.66,1549.94 2612.65,1552.39 2614.64,1554.85 2616.64,1557.21 2618.63,1559.39 2620.62,1561.34 2622.61,1562.96 2624.61,1564.22 2626.60,1565.06 2628.59,1565.47 2630.58,1565.41 2632.58,1564.91 2634.57,1563.96 2636.56,1562.61 2638.55,1560.91 2640.55,1558.90 2642.54,1556.66 2644.53,1554.28 2646.52,1551.82 2648.52,1549.37 2650.51,1547.02 2652.50,1544.85" fill="none" stroke="#474747" stroke-width="3"/>
<path d="M2521 1637.5 L2652 1631" stroke="#474747" stroke-width="2.6"/>
</svg>
<span class="t" style="left:187.67px;top:54.03px;font-size:46.51px;color:#dcdcdc;font-weight:bold;transform:scaleX(0.9090);">GYRO</span>
<span class="t" style="left:398.52px;top:56.34px;font-size:38.23px;color:#dcdcdc;transform:scaleX(0.9857);">Cali Hills</span>
<span class="t" style="left:1160.27px;top:58.71px;font-size:37.79px;color:#dcdcdc;transform:scaleX(1.0178);">Speed</span>
<span class="t" style="left:1301.82px;top:59.33px;font-size:37.06px;color:#000;transform:scaleX(0.9862);">1/2</span>
<span class="t" style="left:1396.79px;top:59.33px;font-size:37.06px;color:#000;transform:scaleX(0.8705);">X1</span>
<span class="t" style="left:1479.17px;top:59.33px;font-size:37.06px;color:#000;transform:scaleX(1.0150);">X2</span>
<span class="t" style="left:1674.56px;top:58.71px;font-size:37.79px;color:#dcdcdc;transform:scaleX(1.0078);">Transpose</span>
<span class="t" style="left:1921.40px;top:59.33px;font-size:37.06px;color:#fff;transform:scaleX(1.1040);">0</span>
<span class="t" style="left:2015.62px;top:50.82px;font-size:51.60px;color:#7c7c7c;transform:scaleX(0.9618);-webkit-text-stroke:1.0px #262626;">Cm7</span>
<span class="t" style="left:46.63px;top:176.58px;font-size:53.78px;color:#f4f4f4;transform:scaleX(0.9222);-webkit-text-stroke:1.0px #262626;">Randomize</span>
<span class="t" style="left:320.56px;top:176.58px;font-size:53.78px;color:#9a9a9a;transform:scaleX(0.9378);-webkit-text-stroke:1.0px #262626;">Browse</span>
<span class="t" style="left:147.15px;top:497.71px;font-size:37.79px;color:#dcdcdc;transform:scaleX(1.0178);">Patterns</span>
<span class="t" style="left:323.85px;top:497.71px;font-size:37.79px;color:#dcdcdc;transform:scaleX(1.0023);">Vel</span>
<span class="t" style="left:515.92px;top:497.71px;font-size:37.79px;color:#dcdcdc;transform:scaleX(1.0312);">Algorithm</span>
<span class="t" style="left:72.73px;top:635.65px;font-size:38.81px;color:#f74a8c;transform:scaleX(0.9095);">A</span>
<span class="t" style="left:454.52px;top:638.51px;font-size:37.79px;color:#f74a8c;transform:scaleX(0.9944);">Bass</span>
<span class="t" style="left:70.92px;top:796.65px;font-size:38.81px;color:#c4e600;transform:scaleX(0.9669);">B</span>
<span class="t" style="left:454.42px;top:799.51px;font-size:37.79px;color:#c4e600;transform:scaleX(1.0261);">Hook</span>
<span class="t" style="left:71.69px;top:957.65px;font-size:38.81px;color:#00e0c0;transform:scaleX(0.9333);">C</span>
<span class="t" style="left:455.66px;top:960.51px;font-size:37.79px;color:#00e0c0;transform:scaleX(1.0260);">Chord</span>
<span class="t" style="left:70.96px;top:1118.65px;font-size:38.81px;color:#9b90ff;transform:scaleX(0.9560);">D</span>
<span class="t" style="left:457.52px;top:1121.51px;font-size:37.79px;color:#9b90ff;transform:scaleX(1.0214);">Arp</span>
<span class="t" style="left:838.66px;top:388.64px;font-size:38.23px;color:#dcdcdc;transform:scaleX(1.0009);">Playback</span>
<span class="t" style="left:1076.78px;top:401.14px;font-size:38.23px;color:#dcdcdc;transform:scaleX(1.0014);">Speed</span>
<span class="t" style="left:1296.59px;top:387.34px;font-size:38.23px;color:#dcdcdc;transform:scaleX(1.0241);">Length</span>
<span class="t" style="left:1462.14px;top:387.34px;font-size:38.23px;color:#dcdcdc;transform:scaleX(1.0214);">Swing</span>
<span class="t" style="left:1637.06px;top:387.34px;font-size:38.23px;color:#dcdcdc;transform:scaleX(1.0169);">Grid</span>
<span class="t" style="left:1807.28px;top:272.38px;font-size:39.24px;color:#dcdcdc;transform:scaleX(0.9991);">Direction</span>
<span class="t" style="left:2320.78px;top:272.38px;font-size:39.24px;color:#dcdcdc;transform:scaleX(1.0006);">Loop</span>
<span class="t" style="left:1807.35px;top:353.18px;font-size:39.24px;color:#dcdcdc;transform:scaleX(0.9780);">Retrig on</span>
<span class="t" style="left:2035.32px;top:352.69px;font-size:38.52px;color:#000;transform:scaleX(1.0054);">Pattern</span>
<span class="t" style="left:2252.75px;top:352.69px;font-size:38.52px;color:#000;transform:scaleX(1.0106);">Chord</span>
<span class="t" style="left:1015.64px;top:495.77px;font-size:36.77px;color:#000;transform:scaleX(1.0000);">A</span>
<span class="t" style="left:1125.68px;top:495.77px;font-size:36.77px;color:#000;transform:scaleX(1.0000);">B</span>
<span class="t" style="left:1235.99px;top:495.77px;font-size:36.77px;color:#000;transform:scaleX(1.0000);">C</span>
<span class="t" style="left:1346.38px;top:495.77px;font-size:36.77px;color:#000;transform:scaleX(1.0000);">D</span>
<span class="t" style="left:2310.14px;top:494.39px;font-size:38.52px;color:#dcdcdc;transform:scaleX(0.9605);">Snap</span>
<span class="t" style="left:2477.82px;top:495.01px;font-size:37.79px;color:#dcdcdc;transform:scaleX(0.8994);">1/16</span>
<span class="t" style="left:849.95px;top:742.16px;font-size:45.06px;color:#a8a8a8;transform:scaleX(1.0408);">D#4</span>
<span class="t" style="left:854.31px;top:877.36px;font-size:45.06px;color:#a8a8a8;transform:scaleX(1.0124);">A#3</span>
<span class="t" style="left:849.98px;top:1012.56px;font-size:45.06px;color:#a8a8a8;transform:scaleX(1.0350);">D#3</span>
<span class="t" style="left:865.24px;top:1147.76px;font-size:45.06px;color:#a8a8a8;transform:scaleX(1.0020);">C3</span>
<span class="t" style="left:865.28px;top:1282.96px;font-size:45.06px;color:#a8a8a8;transform:scaleX(0.9853);">C2</span>
<span class="t" style="left:434.55px;top:1655.80px;font-size:44.19px;color:#555;transform:scaleX(0.9728);">2</span>
<span class="t" style="left:548.94px;top:1655.80px;font-size:44.19px;color:#555;transform:scaleX(0.9910);">3</span>
<span class="t" style="left:664.04px;top:1655.80px;font-size:44.19px;color:#555;transform:scaleX(0.9859);">4</span>
<span class="t" style="left:378.09px;top:1454.42px;font-size:53.49px;color:#f2f2f2;transform:scaleX(0.8911);-webkit-text-stroke:1.4px #262626;">Pattern</span>
<span class="t" style="left:893.29px;top:1454.42px;font-size:53.49px;color:#acacac;transform:scaleX(0.9376);-webkit-text-stroke:1.4px #262626;">Chord</span>
<span class="t" style="left:1553.44px;top:1454.42px;font-size:53.49px;color:#acacac;transform:scaleX(0.9388);-webkit-text-stroke:1.4px #262626;">Sound</span>
<span class="t" style="left:2090.27px;top:1454.42px;font-size:53.49px;color:#acacac;transform:scaleX(0.9188);-webkit-text-stroke:1.4px #262626;">Effect</span>
<span class="t" style="left:2554.67px;top:1454.42px;font-size:53.49px;color:#acacac;transform:scaleX(0.9873);-webkit-text-stroke:1.4px #262626;">Mod</span>
</body></html>
